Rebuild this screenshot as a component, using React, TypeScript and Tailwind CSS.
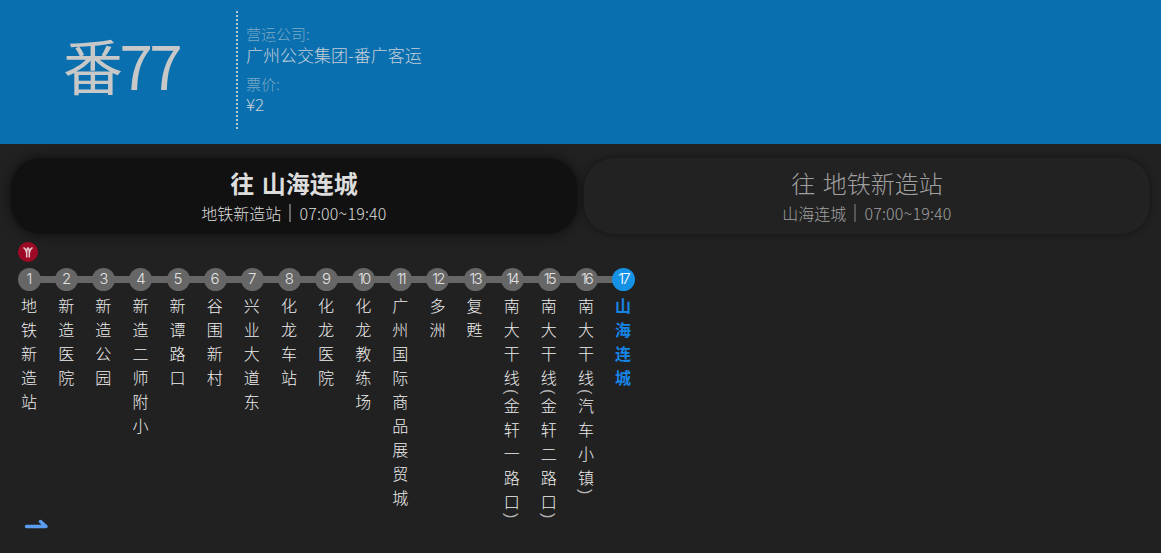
import type { ReactNode } from "react";

const stations = [
  "地铁新造站",
  "新造医院",
  "新造公园",
  "新造二师附小",
  "新谭路口",
  "谷围新村",
  "兴业大道东",
  "化龙车站",
  "化龙医院",
  "化龙教练场",
  "广州国际商品展贸城",
  "多洲",
  "复甦",
  "南大干线(金轩一路口)",
  "南大干线(金轩二路口)",
  "南大干线(汽车小镇)",
  "山海连城",
];

const cjk = "font-['Noto_Sans_CJK_SC','Noto_Sans',sans-serif]";

function StationName({ name }: { name: string }): ReactNode {
  return (
    <div className="mt-[7px] text-base leading-6 tracking-[8px] [writing-mode:vertical-lr]">
      {name.split("").map((ch, i) =>
        ch === "(" || ch === ")" ? (
          <span key={i} className="relative -top-[5px] -left-[1px] font-['Liberation_Sans',sans-serif] tracking-[-1px] text-[#b4b4b4]">
            {ch}
          </span>
        ) : (
          <span key={i}>{ch}</span>
        ),
      )}
    </div>
  );
}

function DirectionTab({
  title,
  from,
  active,
}: {
  title: string;
  from: string;
  active?: boolean;
}) {
  return (
    <div
      className={`flex h-[76px] flex-1 flex-col items-center rounded-[30px] pt-[9px] ${
        active
          ? "bg-[#111111] text-[#dddddd] shadow-[0_0_12px_#0d0d0d]"
          : "bg-[#222222] text-[#a0a0a0] shadow-[0_0_6px_#141414]"
      }`}
    >
      <div className={`text-2xl leading-8 [word-spacing:2px] ${active ? "font-semibold" : "font-light"}`}>
        {title}
      </div>
      <div className="mt-[2px] flex items-center text-base leading-6 font-light">
        {from}
        <span className={`mx-[8px] h-[18px] w-[2px] ${active ? "bg-[#666666]" : "bg-[#555555]"}`} />
        <span className="tracking-[0.2px]">07:00~19:40</span>
      </div>
    </div>
  );
}

export default function App() {
  return (
    <div className={`h-[553px] w-[1161px] overflow-hidden bg-[#212121] ${cjk}`}>
      {/* Route header */}
      <div className="flex h-[144px] bg-[#0a6fae]">
        <div className="flex h-full w-[236px] items-center justify-center pb-[17px] pl-[6px] text-[60px] tracking-[-3.5px] text-[#c8c8c8]">
          番77
        </div>
        <div className="mt-[11px] h-[118px] border-l-2 border-dotted border-[#b9c9d4]" />
        <div className="pl-[8px] pt-[24px] font-light">
          <div className="text-[15px] leading-[20px] text-[#7aa8c6]">营运公司:</div>
          <div className="text-[17px] leading-[22px] text-[#c5d0d8]">广州公交集团-番广客运</div>
          <div className="mt-[8px] text-[15px] leading-[20px] text-[#7aa8c6]">票价:</div>
          <div className="text-[17px] leading-[19px] text-[#c5d0d8]">¥2</div>
        </div>
      </div>

      {/* Direction tabs */}
      <div className="flex gap-[7px] px-[11px] pt-[14px]">
        <DirectionTab title="往 山海连城" from="地铁新造站" active />
        <DirectionTab title="往 地铁新造站" from="山海连城" />
      </div>

      {/* Station line */}
      <div className="pl-[11px] pt-[8px]">
        <svg width="20" height="20" viewBox="0 0 20 20" className="ml-[7px] block">
          <circle cx="10" cy="10" r="10" fill="#9c0a26" />
          <path
            d="M8.7 15.5V11C8.7 8.5 7.5 7 5.5 5.5M11.3 15.5V11C11.3 8.5 12.5 7 14.5 5.5M8.7 11C8.7 8 9.5 6 10 6C10.5 6 11.3 8 11.3 11"
            fill="none"
            stroke="#e3c9cd"
            strokeWidth="1.5"
          />
        </svg>
        <div className="relative mt-[6px]">
          <div className="absolute left-[18px] top-[8px] h-[7px] w-[594px] bg-[#666666]" />
          <div className="relative flex">
            {stations.map((name, i) => {
              const last = i === stations.length - 1;
              return (
                <div key={name} className="w-[37.125px] shrink-0">
                  <div
                    className={`ml-[7px] flex h-[23px] w-[23px] items-center justify-center rounded-full font-['Inter',sans-serif] text-[15px] font-light ${
                      i > 8 ? "tracking-[-2px]" : ""
                    } ${last ? "bg-[#1592e6] text-white" : "bg-[#666666] text-[#e0e0e0]"}`}
                  >
                    {i + 1}
                  </div>
                  <div className={`ml-[6px] ${last ? "font-semibold text-[#1785e6]" : "font-light text-[#eeeeee]"}`}>
                    <StationName name={name} />
                  </div>
                </div>
              );
            })}
          </div>
        </div>
      </div>

      {/* Direction arrow */}
      <svg width="26" height="12" viewBox="0 0 26 12" className="ml-[24px] mt-[-6px] block">
        <path
          d="M2.5 9.5H22L16.5 4.5"
          fill="none"
          stroke="#5b9bf0"
          strokeWidth="3.5"
          strokeLinecap="round"
          strokeLinejoin="round"
        />
      </svg>
    </div>
  );
}
